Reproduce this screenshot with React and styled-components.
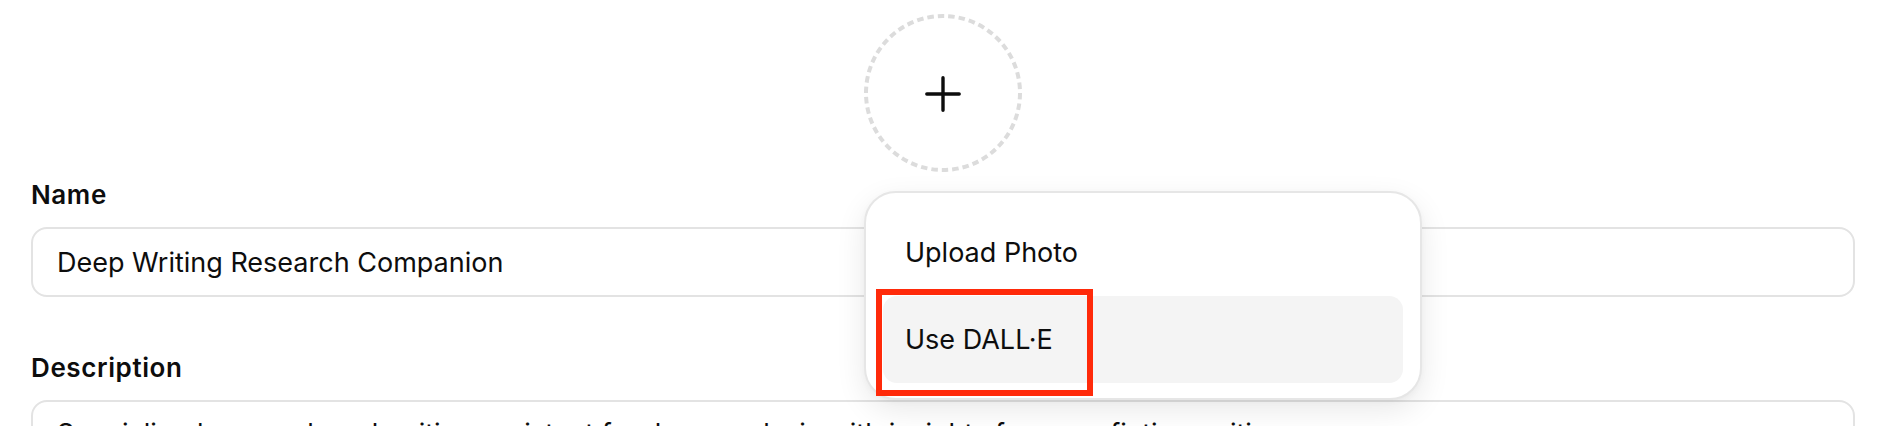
import React from "react";
import styled, { createGlobalStyle } from "styled-components";

const GlobalStyle = createGlobalStyle`
  html, body {
    margin: 0;
    padding: 0;
    background: #ffffff;
    overflow: hidden;
  }
  body {
    font-family: Inter, "Noto Sans", "Liberation Sans", sans-serif;
    color: #0d0d0d;
  }
`;

const PlusIcon = () => (
  <svg width="36" height="36" viewBox="0 0 36 36" fill="none">
    <path
      d="M18 1.8v32.4M1.8 18h32.4"
      stroke="#0d0d0d"
      strokeWidth="3.4"
      strokeLinecap="round"
    />
  </svg>
);

const DashedRing = () => (
  <Ring viewBox="0 0 158 158">
    <circle
      cx="79"
      cy="79"
      r="77"
      fill="none"
      stroke="#dcdcdc"
      strokeWidth="4"
      strokeDasharray="6.5 4"
    />
  </Ring>
);

const App = () => {
  return (
    <Page>
      <GlobalStyle />
      <AvatarRow>
        <AvatarAnchor>
          <AvatarButton type="button">
            <DashedRing />
            <PlusIcon />
          </AvatarButton>
          <Menu>
            <MenuItem>Upload Photo</MenuItem>
            <MenuItem active>
              Use DALL·E
              <Highlight />
            </MenuItem>
          </Menu>
        </AvatarAnchor>
      </AvatarRow>
      <Form>
        <Field>
          <Label>Name</Label>
          <Input defaultValue="Deep Writing Research Companion" />
        </Field>
        <Field>
          <Label>Description</Label>
          <TextArea
            rows={2}
            defaultValue="Specialized research and writing assistant for deep analysis with insights from nonfiction writing"
          />
        </Field>
      </Form>
    </Page>
  );
};

export default App;

const Page = styled.div`
  padding: 14px 25px 0 31px;
`;

const AvatarRow = styled.div`
  display: flex;
  justify-content: center;
`;

const AvatarAnchor = styled.div`
  position: relative;
  width: 158px;
  height: 158px;
`;

const AvatarButton = styled.button`
  position: relative;
  display: flex;
  align-items: center;
  justify-content: center;
  width: 158px;
  height: 158px;
  padding: 0;
  border: none;
  border-radius: 50%;
  background: transparent;
  cursor: pointer;
  svg:last-child {
    margin-top: 1px;
  }
`;

const Ring = styled.svg`
  position: absolute;
  inset: 0;
  width: 158px;
  height: 158px;
`;

const Menu = styled.div`
  position: absolute;
  top: calc(100% + 19px);
  left: 0;
  z-index: 10;
  box-sizing: border-box;
  width: 558px;
  padding: 16px 17px 15px;
  display: flex;
  flex-direction: column;
  background: #ffffff;
  border: 2px solid #e6e6e6;
  border-radius: 32px;
  box-shadow: 0 10px 30px rgba(0, 0, 0, 0.09), 0 2px 6px rgba(0, 0, 0, 0.03);
`;

const MenuItem = styled.div`
  position: relative;
  display: flex;
  align-items: center;
  height: 87px;
  padding-left: 22px;
  border-radius: 14px;
  font-size: 27px;
  color: #0d0d0d;
  background: ${props => (props.active ? "#f4f4f4" : "transparent")};
`;

const Highlight = styled.div`
  position: absolute;
  left: -7px;
  top: -7px;
  width: 217px;
  height: 107px;
  box-sizing: border-box;
  border: 6px solid #ff2a0a;
`;

const Form = styled.div`
  margin-top: 7px;
  display: flex;
  flex-direction: column;
  gap: 55px;
`;

const Field = styled.div`
  display: flex;
  flex-direction: column;
  gap: 16px;
`;

const Label = styled.label`
  font-size: 26px;
  line-height: 32px;
  font-weight: 600;
  letter-spacing: 0.6px;
  color: #0d0d0d;
`;

const Input = styled.input`
  box-sizing: border-box;
  width: 100%;
  height: 70px;
  padding: 0 24px;
  border: 2px solid #e3e3e3;
  border-radius: 16px;
  font-family: Inter, "Noto Sans", sans-serif;
  font-size: 27px;
  color: #0d0d0d;
  outline: none;
`;

const TextArea = styled.textarea`
  box-sizing: border-box;
  width: 100%;
  height: 120px;
  padding: 12px 24px;
  border: 2px solid #e3e3e3;
  border-radius: 16px;
  font-family: Inter, "Noto Sans", sans-serif;
  font-size: 27px;
  line-height: 40px;
  color: #0d0d0d;
  resize: none;
  outline: none;
`;
